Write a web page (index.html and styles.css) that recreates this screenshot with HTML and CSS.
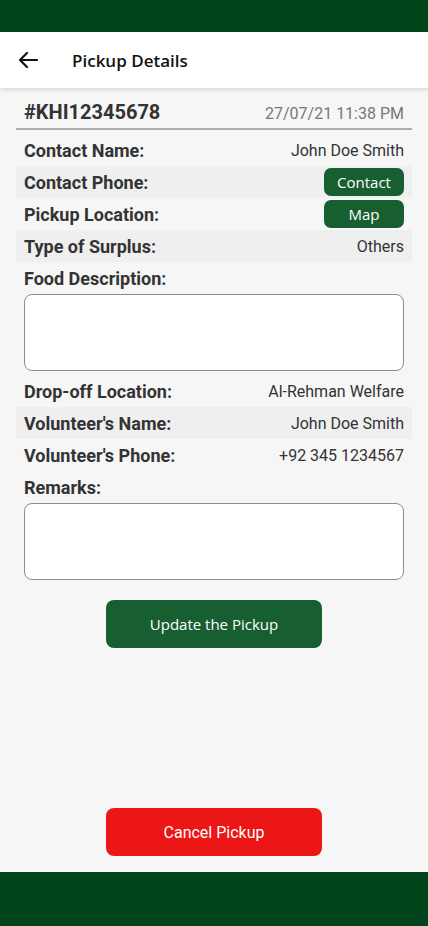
FILE: index.html
```html
<!DOCTYPE html>
<html>
<head>
<meta charset="utf-8">
<link rel="stylesheet" href="styles.css">
</head>
<body>
<div class="app">
  <div class="statusbar"></div>
  <header class="appbar">
    <svg class="back" width="24" height="24" viewBox="0 0 24 24"><path d="M21 12H4M11 5l-7 7 7 7" fill="none" stroke="#111" stroke-width="2.2" stroke-linecap="round" stroke-linejoin="round"/></svg>
    <span class="title">Pickup Details</span>
  </header>
  <main class="content">
    <div class="idrow">
      <span class="pid">#KHI12345678</span>
      <span class="date">27/07/21 11:38 PM</span>
    </div>
    <div class="row"><span class="label">Contact Name:</span><span class="value">John Doe Smith</span></div>
    <div class="row alt"><span class="label">Contact Phone:</span><span class="pill">Contact</span></div>
    <div class="row"><span class="label">Pickup Location:</span><span class="pill">Map</span></div>
    <div class="row alt"><span class="label">Type of Surplus:</span><span class="value">Others</span></div>
    <div class="row"><span class="label">Food Description:</span></div>
    <div class="box"></div>
    <div class="row first"><span class="label">Drop-off Location:</span><span class="value">Al-Rehman Welfare</span></div>
    <div class="row alt"><span class="label">Volunteer's Name:</span><span class="value">John Doe Smith</span></div>
    <div class="row"><span class="label">Volunteer's Phone:</span><span class="value">+92 345 1234567</span></div>
    <div class="row"><span class="label">Remarks:</span></div>
    <div class="box"></div>
    <div class="actions">
      <button class="btn update">Update the Pickup</button>
    </div>
    <div class="spacer"></div>
    <div class="actions bottom">
      <button class="btn cancel">Cancel Pickup</button>
    </div>
  </main>
  <footer class="navbar"></footer>
</div>
</body>
</html>
```
FILE: styles.css
```css
* { box-sizing: border-box; }
html, body { margin: 0; padding: 0; }
body { background: #f6f6f6; font-family: Roboto, "Liberation Sans", sans-serif; color: #333; }
.app { width: 428px; height: 926px; display: flex; flex-direction: column; }
.statusbar { height: 32px; background: #00441b; flex: none; }
.appbar {
  height: 56px; background: #fff; flex: none;
  display: flex; align-items: center;
  padding-left: 16px;
  box-shadow: 0 2px 4px rgba(0,0,0,0.12);
  position: relative; z-index: 1;
}
.back { display: block; }
.title { margin-left: 32px; font-family: "Open Sans", "Noto Sans", sans-serif; font-size: 17px; font-weight: 600; color: #111; }
.content { flex: 1; display: flex; flex-direction: column; padding: 12px 16px 16px; }
.idrow {
  display: flex; justify-content: space-between; align-items: baseline;
  padding: 0 8px 4px;
  border-bottom: 2px solid #adadad;
  height: 30px;
}
.pid { font-size: 20px; font-weight: 700; color: #333; }
.date { font-size: 16px; color: #777; }
.row {
  height: 32px; display: flex; justify-content: space-between; align-items: center;
  padding: 0 8px;
}
.row:nth-child(2) { margin-top: 4px; }
.row.first { margin-top: 5px; height: 31px; }
.alt { background: #efefef; }
.label { font-size: 18px; font-weight: 700; color: #333; }
.value { font-size: 16px; color: #333; }
.pill {
  width: 80px; height: 28px; border-radius: 7px; background: #175e31; color: #fff;
  font-family: "Open Sans", "Noto Sans", sans-serif; font-size: 15px;
  display: flex; align-items: center; justify-content: center;
}
.box {
  margin: 0 8px; height: 77px; background: #fff;
  border: 1px solid #8c8c8c; border-radius: 8px;
}
.actions { display: flex; justify-content: center; margin-top: 20px; }
.btn {
  width: 216px; height: 48px; border: none; border-radius: 8px; color: #fff;
  font-size: 15px; cursor: pointer;
}
.update { background: #175e31; font-family: "Open Sans", "Noto Sans", sans-serif; }
.cancel { background: #ed1616; font-family: Roboto, sans-serif; font-size: 16px; }
.spacer { flex: 1; }
.actions.bottom { margin-top: 0; }
.navbar { height: 54px; background: #00441b; flex: none; }
```
